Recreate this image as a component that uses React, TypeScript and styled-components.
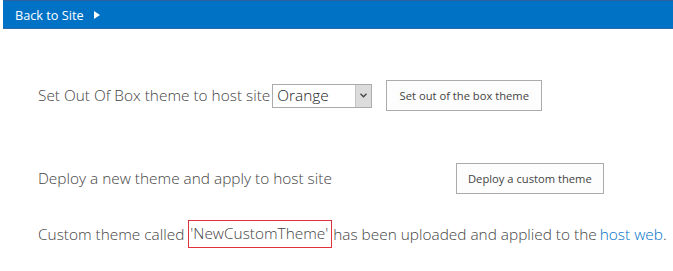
import styled, { createGlobalStyle } from 'styled-components';

const GlobalStyle = createGlobalStyle`
    html, body {
        margin: 0;
        padding: 0;
        background: #ffffff;
    }
    body {
        font-family: 'Open Sans', 'Segoe UI', sans-serif;
        color: #444444;
    }
`;

const Page = styled.div`
    width: 673px;
    height: 271px;
    padding-left: 3px;
    box-sizing: border-box;
    overflow: hidden;
`;

const TopBar = styled.div`
    height: 29px;
    box-sizing: border-box;
    background: #0072c6;
    border-top: 1px solid #2b5f9e;
    border-bottom: 1px solid #2b6aa8;
    display: flex;
    align-items: center;
    padding-left: 12px;
    gap: 10px;
`;

const BackLink = styled.a`
    color: #ffffff;
    font-size: 12.7px;
    text-decoration: none;
`;

const Caret = styled.svg`
    width: 6px;
    height: 8px;
    fill: #ffffff;
`;

const Content = styled.div`
    padding: 51px 0 0 35px;
`;

const Row = styled.div<{ $top?: number }>`
    display: flex;
    align-items: center;
    margin-top: ${({ $top }) => $top ?? 0}px;
    height: 31px;
`;

const Label = styled.span`
    font-size: 15.4px;
    font-weight: 300;
    white-space: nowrap;
`;

const SelectBox = styled.div`
    display: flex;
    align-items: stretch;
    width: 100px;
    height: 24px;
    box-sizing: border-box;
    border: 1px solid #ababab;
    margin-left: 2px;
`;

const SelectValue = styled.span`
    flex: 1;
    font-size: 15.4px;
    font-weight: 300;
    color: #222222;
    padding-left: 4px;
    line-height: 22px;
`;

const SelectArrow = styled.span`
    width: 15px;
    background: #dcdcdc;
    border-left: 1px solid #c4c4c4;
    display: flex;
    align-items: center;
    justify-content: center;
`;

const Button = styled.button<{ $width: number; $left: number }>`
    width: ${({ $width }) => $width}px;
    margin-left: ${({ $left }) => $left}px;
    height: 31px;
    box-sizing: border-box;
    border: 1px solid #ababab;
    background: #fdfdfd;
    font-family: 'Open Sans', 'Segoe UI', sans-serif;
    font-size: 11.2px;
    color: #444444;
    padding: 0;
`;

const Message = styled.div`
    display: flex;
    align-items: center;
    margin-top: 26px;
    font-size: 15.4px;
    font-weight: 300;
    white-space: nowrap;
`;

const ThemeName = styled.span`
    border: 1px solid #e0313c;
    padding: 2px 3px 3px 1px;
    margin-right: 1px;
`;

const HostLink = styled.a`
    color: #0072c6;
    text-decoration: none;
    margin-left: 3px;
`;

const App = () => {
    return (
        <Page>
            <GlobalStyle />
            <TopBar>
                <BackLink href="#">Back to Site</BackLink>
                <Caret viewBox="0 0 6 8">
                    <path d="M0 0 L6 4 L0 8 Z" />
                </Caret>
            </TopBar>
            <Content>
                <Row>
                    <Label>Set Out Of Box theme to host site</Label>
                    <SelectBox>
                        <SelectValue>Orange</SelectValue>
                        <SelectArrow>
                            <svg width="7" height="5" viewBox="0 0 7 5">
                                <path d="M0.5 0.8 L3.5 3.8 L6.5 0.8" stroke="#444" strokeWidth="1.3" fill="none" />
                            </svg>
                        </SelectArrow>
                    </SelectBox>
                    <Button $width={156} $left={14}>Set out of the box theme</Button>
                </Row>
                <Row $top={52}>
                    <Label>Deploy a new theme and apply to host site</Label>
                    <Button $width={148} $left={124}>Deploy a custom theme</Button>
                </Row>
                <Message>
                    Custom theme called&nbsp;
                    <ThemeName>'NewCustomTheme'</ThemeName>
                    has been uploaded and applied to the
                    <HostLink href="#">host web</HostLink>.
                </Message>
            </Content>
        </Page>
    );
};

export default App;
